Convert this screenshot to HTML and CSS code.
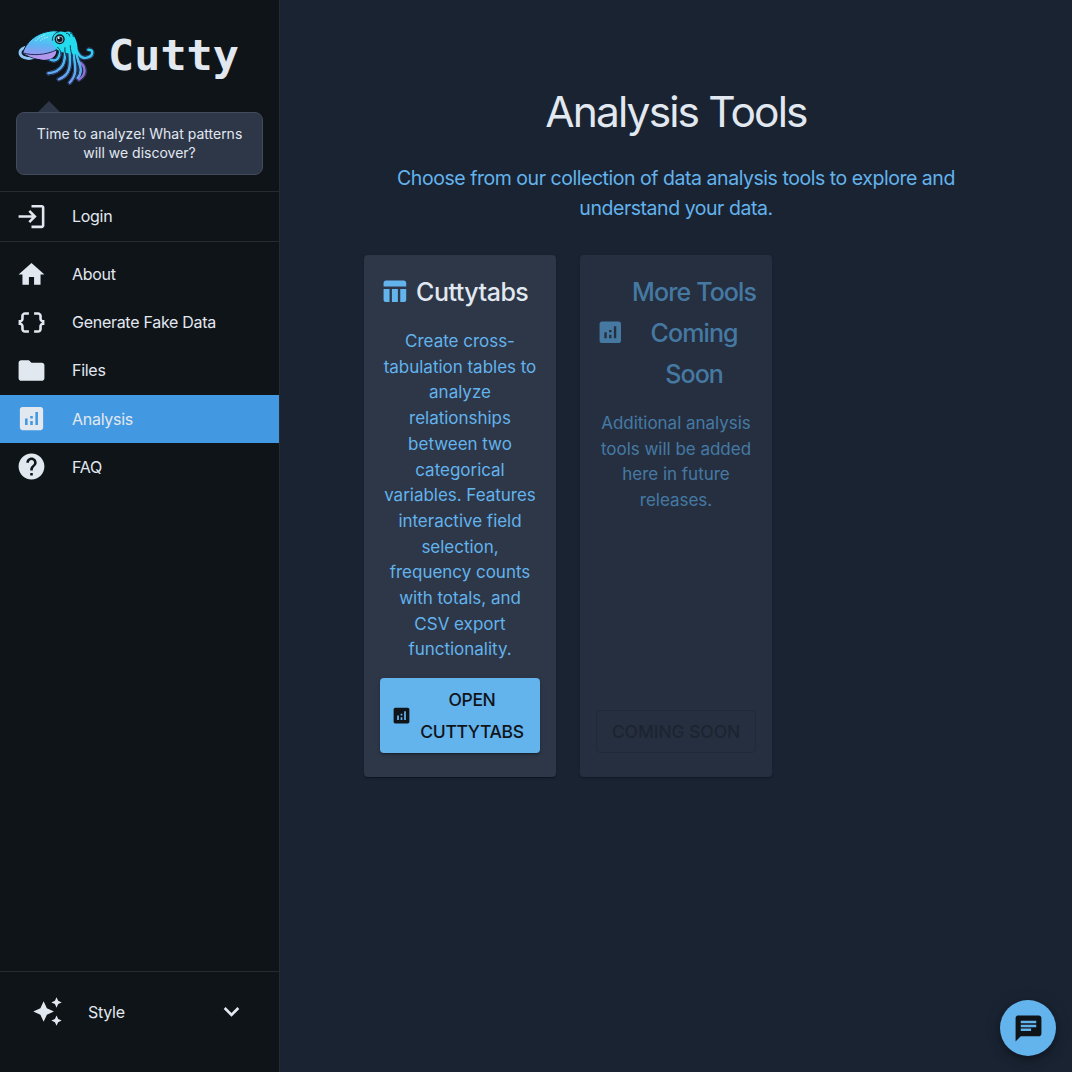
FILE: index.html
```html
<!DOCTYPE html>
<html lang="en">
<head>
<meta charset="utf-8">
<title>Cutty – Analysis Tools</title>
<link rel="stylesheet" href="styles.css">
</head>
<body>
<svg class="defs" width="0" height="0" aria-hidden="true">
  <symbol id="analytics" viewBox="0 0 24 24"><path d="M19 3H5c-1.1 0-2 .9-2 2v14c0 1.1.9 2 2 2h14c1.1 0 2-.9 2-2V5c0-1.1-.9-2-2-2zM9 17H7v-5h2v5zm4 0h-2v-3h2v3zm0-5h-2v-2h2v2zm4 5h-2V7h2v10z"/></symbol>
</svg>
<div class="app">
  <aside class="sidebar">
    <header class="brand">
      <svg class="squid" viewBox="0 0 270 210" aria-label="Cutty the cuttlefish">
        <defs>
          <linearGradient id="mantle" x1="0.6" y1="0" x2="0.5" y2="1"><stop offset="0" stop-color="#35e6f2"/><stop offset=".5" stop-color="#5cb4f3"/><stop offset="1" stop-color="#b58bf0"/></linearGradient>
          <linearGradient id="arm" gradientUnits="userSpaceOnUse" x1="170" y1="60" x2="165" y2="195"><stop offset="0" stop-color="#1ce8f0"/><stop offset=".5" stop-color="#4db6f0"/><stop offset="1" stop-color="#7896ee"/></linearGradient>
        </defs>
        <g fill="none" stroke-linecap="round" stroke-linejoin="round">
          <path d="M44 83C25 90 26 106 44 113c8 3 20 2 28-1" stroke="#8fc6f5" stroke-width="9"/>
          <path d="M45 87c-8 7-7 15 4 20" stroke="#163252" stroke-width="3"/>
          <g stroke="#48619c" stroke-width="13">
            <path d="M192 75c14 35 24 42 39 38 20-5 21-25 4-24"/><path d="M205 125c24 12 25 40 2 53"/><path d="M198 90c1 36 28 57 5 84"/><path d="M190 88c0 40 19 68-11 100"/><path d="M178 88c2 38 10 74-32 90"/><path d="M165 88c2 38-5 66-50 72"/><path d="M153 85c-5 32-15 47-40 29"/>
          </g>
          <g stroke="#0b1b33" stroke-width="11">
            <path d="M192 75c14 35 24 42 39 38 20-5 21-25 4-24"/><path d="M205 125c24 12 25 40 2 53"/><path d="M198 90c1 36 28 57 5 84"/><path d="M190 88c0 40 19 68-11 100"/><path d="M178 88c2 38 10 74-32 90"/><path d="M165 88c2 38-5 66-50 72"/><path d="M153 85c-5 32-15 47-40 29"/>
          </g>
          <g stroke="url(#arm)" stroke-width="7.5">
            <path d="M205 125c24 12 25 40 2 53" stroke="#9270d4"/>
            <path d="M192 75c14 35 24 42 39 38 20-5 21-25 4-24"/><path d="M198 90c1 36 28 57 5 84"/><path d="M190 88c0 40 19 68-11 100"/><path d="M178 88c2 38 10 74-32 90"/><path d="M165 88c2 38-5 66-50 72"/><path d="M153 85c-5 32-15 47-40 29"/>
          </g>
        </g>
        <path d="M38 99C48 66 78 41 112 35c14-3 26-4 35 0l-8 52c0 16-10 33-38 33-26-2-48-11-63-21z" fill="url(#mantle)" stroke="#0b1b33" stroke-width="3"/>
        <path d="M40 99c28 4 61 7 99-8 0 18-12 29-38 28-25-2-46-10-61-20z" fill="#b397ed"/>
        <path d="M39 99c30 8 66 7 101-9" fill="none" stroke="#12335c" stroke-width="3"/>
        <path d="M130 46c8-13 25-13 35-9 10-5 23-1 25 9 12 16 14 35 12 57-18-3-36-2-53-10-19-6-25-29-19-47z" fill="#22dced"/>
        <path d="M127 62c0-18 11-26 22-27M168 40c7-1 10 3 11 9M180 39c7 0 10 5 10 12M142 81c8 8 12 13 9 23M165 82c-2 10 2 20 4 28M181 76c-1 12 4 25 7 35" fill="none" stroke="#0b3b5c" stroke-width="3"/>
        <circle cx="149" cy="58" r="15" fill="#0b1726"/><circle cx="149" cy="58" r="11" fill="#86aeba"/><circle cx="149" cy="58" r="8" fill="#101722"/><circle cx="146" cy="54" r="3" fill="#fff"/>
        <path d="M78 62q12-13 29-17M92 61q9-8 20-9" fill="none" stroke="#d6fcff" stroke-width="3" stroke-dasharray="1 6" stroke-linecap="round"/>
      </svg>
      <span class="wordmark">Cutty</span>
    </header>
    <div class="bubble">Time to analyze! What patterns<br>will we discover?</div>
    <nav>
      <div class="group account">
        <a class="item"><svg class="icon" viewBox="0 0 24 24"><path d="M11 7 9.6 8.4l2.6 2.6H2v2h10.2l-2.6 2.6L11 17l5-5zm9 12h-8v2h8c1.1 0 2-.9 2-2V5c0-1.1-.9-2-2-2h-8v2h8z"/></svg><span>Login</span></a>
      </div>
      <div class="group pages">
        <a class="item"><svg class="icon" viewBox="0 0 24 24"><path d="M10 20v-6h4v6h5v-8h3L12 3 2 12h3v8z"/></svg><span>About</span></a>
        <a class="item"><svg class="icon" viewBox="0 0 24 24"><path d="M4 7v2c0 .55-.45 1-1 1H2v4h1c.55 0 1 .45 1 1v2c0 1.65 1.35 3 3 3h3v-2H7c-.55 0-1-.45-1-1v-2c0-1.3-.84-2.42-2-2.83v-.34C5.16 11.42 6 10.3 6 9V7c0-.55.45-1 1-1h3V4H7C5.35 4 4 5.35 4 7m17 3c-.55 0-1-.45-1-1V7c0-1.65-1.35-3-3-3h-3v2h3c.55 0 1 .45 1 1v2c0 1.3.84 2.42 2 2.83v.34c-1.16.41-2 1.52-2 2.83v2c0 .55-.45 1-1 1h-3v2h3c1.65 0 3-1.35 3-3v-2c0-.55.45-1 1-1h1v-4z"/></svg><span>Generate Fake Data</span></a>
        <a class="item"><svg class="icon" viewBox="0 0 24 24"><path d="M10 4H4c-1.1 0-1.99.9-1.99 2L2 18c0 1.1.9 2 2 2h16c1.1 0 2-.9 2-2V8c0-1.1-.9-2-2-2h-8z"/></svg><span>Files</span></a>
        <a class="item active"><svg class="icon"><use href="#analytics"/></svg><span>Analysis</span></a>
        <a class="item"><svg class="icon" viewBox="0 0 24 24"><path d="M12 2C6.48 2 2 6.48 2 12s4.48 10 10 10 10-4.48 10-10S17.52 2 12 2zm1 17h-2v-2h2v2zm2.07-7.75l-.9.92C13.45 12.9 13 13.5 13 15h-2v-.5c0-1.1.45-2.1 1.17-2.83l1.24-1.26c.37-.36.59-.86.59-1.41 0-1.1-.9-2-2-2s-2 .9-2 2H8c0-2.21 1.79-4 4-4s4 1.79 4 4c0 .88-.36 1.68-.93 2.25z"/></svg><span>FAQ</span></a>
      </div>
    </nav>
    <footer class="style-menu">
      <svg class="icon" viewBox="0 0 24 24"><path d="m19 9 1.25-2.75L23 5l-2.75-1.25L19 1l-1.25 2.75L15 5l2.75 1.25L19 9zm-7.5.5L9 4 6.5 9.5 1 12l5.5 2.5L9 20l2.5-5.5L17 12l-5.5-2.5zM19 15l-1.25 2.75L15 19l2.75 1.25L19 23l1.25-2.75L23 19l-2.75-1.25L19 15z"/></svg>
      <span class="style-label">Style</span>
      <svg class="icon" viewBox="0 0 24 24"><path d="M16.59 8.59 12 13.17 7.41 8.59 6 10l6 6 6-6z"/></svg>
    </footer>
  </aside>
  <main class="main">
    <h1>Analysis Tools</h1>
    <p class="lead">Choose from our collection of data analysis tools to explore and<br>understand your data.</p>
    <div class="cards">
      <section class="card">
        <div class="card-title">
          <svg class="title-icon" viewBox="0 0 24 24"><path d="M10 10.02h5V21h-5V10.02zM17 21h3c1.1 0 2-.9 2-2v-9h-5v11zm3-18H5c-1.1 0-2 .9-2 2v3h19V5c0-1.1-.9-2-2-2zM3 19c0 1.1.9 2 2 2h3V10H3v9z"/></svg>
          <h2>Cuttytabs</h2>
        </div>
        <p>Create cross-<br>tabulation tables to<br>analyze<br>relationships<br>between two<br>categorical<br>variables. Features<br>interactive field<br>selection,<br>frequency counts<br>with totals, and<br>CSV export<br>functionality.</p>
        <button class="button primary"><svg class="button-icon"><use href="#analytics"/></svg><span>OPEN<br>CUTTYTABS</span></button>
      </section>
      <section class="card upcoming">
        <div class="card-title">
          <svg class="title-icon"><use href="#analytics"/></svg>
          <h2>More Tools<br>Coming<br>Soon</h2>
        </div>
        <p>Additional analysis<br>tools will be added<br>here in future<br>releases.</p>
        <button class="button outlined" disabled>COMING SOON</button>
      </section>
    </div>
  </main>
  <button class="fab" aria-label="Chat"><svg class="icon" viewBox="0 0 24 24"><path d="M20 2H4c-1.1 0-1.99.9-1.99 2L2 22l4-4h14c1.1 0 2-.9 2-2V4c0-1.1-.9-2-2-2zM6 9h12v2H6V9zm8 5H6v-2h8v2zm4-6H6V6h12v2z"/></svg></button>
</div>
</body>
</html>
```
FILE: styles.css
```css
* { box-sizing: border-box; }
body { margin: 0; background: #1a2332; color: #e2e8f0; font-family: Inter, "Liberation Sans", sans-serif; }
h1, h2, p { margin: 0; }
svg { flex: none; fill: currentColor; }
.defs { position: absolute; }
.app { display: flex; height: 1072px; overflow: hidden; }

.sidebar { display: flex; flex-direction: column; width: 280px; flex: none; background: #0f1419; border-right: 1px solid #272b30; }
.brand { display: flex; align-items: center; height: 112px; padding-left: 10px; }
.squid { width: 90px; height: 70px; margin-top: -2px; }
.wordmark { margin-left: 8px; font: 700 43.5px/1 "DejaVu Sans Mono", monospace; }
.bubble { position: relative; height: 63px; margin: 0 16px 16px; padding-top: 11px; border: 1px solid #414b5c; border-radius: 8px; background: #2d3748; text-align: center; font-size: 14px; line-height: 19.3px; white-space: nowrap; }
.bubble::before { content: ""; position: absolute; left: 21px; top: -12px; border: 11px solid transparent; border-top: 0; border-bottom-color: #2d3748; }
.group { border-top: 1px solid #272b30; }
.account { height: 50px; }
.pages { padding-top: 8px; }
.item { display: flex; align-items: center; height: 48.2px; padding-left: 16px; font-size: 16px; letter-spacing: -.28px; white-space: nowrap; }
.item .icon { margin-right: 25px; }
.item.active { background: #4299e1; }
.icon { width: 31px; height: 31px; }
.style-menu { display: flex; align-items: center; height: 101px; margin-top: auto; padding: 0 32px 21px; border-top: 1px solid #272b30; font-size: 16px; letter-spacing: -.28px; }
.style-label { flex: 1; margin-left: 25px; }

.main { flex: 1; padding: 84px 84px 0; text-align: center; }
h1 { height: 79px; font-size: 42.5px; line-height: 56px; font-weight: 400; letter-spacing: -1.88px; }
.lead { height: 92px; color: #63b3ed; font-size: 19.5px; line-height: 30px; letter-spacing: -.46px; white-space: nowrap; }
.cards { display: flex; gap: 24px; height: 522px; }
.card { display: flex; flex-direction: column; width: 192px; padding: 17px 16px 24px; border-radius: 4px; background: #2d3748; color: #63b3ed; box-shadow: 0 2px 1px -1px #0003, 0 1px 1px #0002, 0 1px 3px #0002; white-space: nowrap; }
.card-title { display: flex; align-items: center; gap: 7.5px; margin-bottom: 16px; }
.card-title h2 { flex: 1; font-size: 25px; line-height: 41px; font-weight: 500; letter-spacing: -.88px; }
.card:not(.upcoming) h2 { flex: none; color: #e2e8f0; letter-spacing: -.5px; }
.title-icon { width: 28.6px; height: 28.6px; margin-top: -2px; }
.card p { font-size: 17px; line-height: 25.71px; letter-spacing: -.02px; }
.button { display: flex; align-items: center; justify-content: center; margin-top: auto; border: 0; border-radius: 4px; color: #0f1419; font: 500 17.5px/32px Inter, sans-serif; white-space: nowrap; }
.primary { height: 75px; padding: 0 11px 0 6px; gap: 8px; background: #63b3ed; box-shadow: 0 3px 1px -2px #0003, 0 2px 2px #0002, 0 1px 5px #0002; letter-spacing: -.35px; }
.button-icon { width: 21px; height: 21px; }
.upcoming { opacity: .6; }
.outlined { height: 43px; border: 1px solid rgba(15, 20, 25, .25); background: transparent; color: rgba(15, 20, 25, .5); letter-spacing: -.1px; }
.fab { position: absolute; left: 1000px; top: 1000px; display: flex; align-items: center; justify-content: center; width: 56px; height: 56px; padding: 0; border: 0; border-radius: 50%; background: #63b3ed; color: #0f1419; box-shadow: 0 3px 5px -1px #0003, 0 6px 10px #0002, 0 1px 18px #0002; }
```
